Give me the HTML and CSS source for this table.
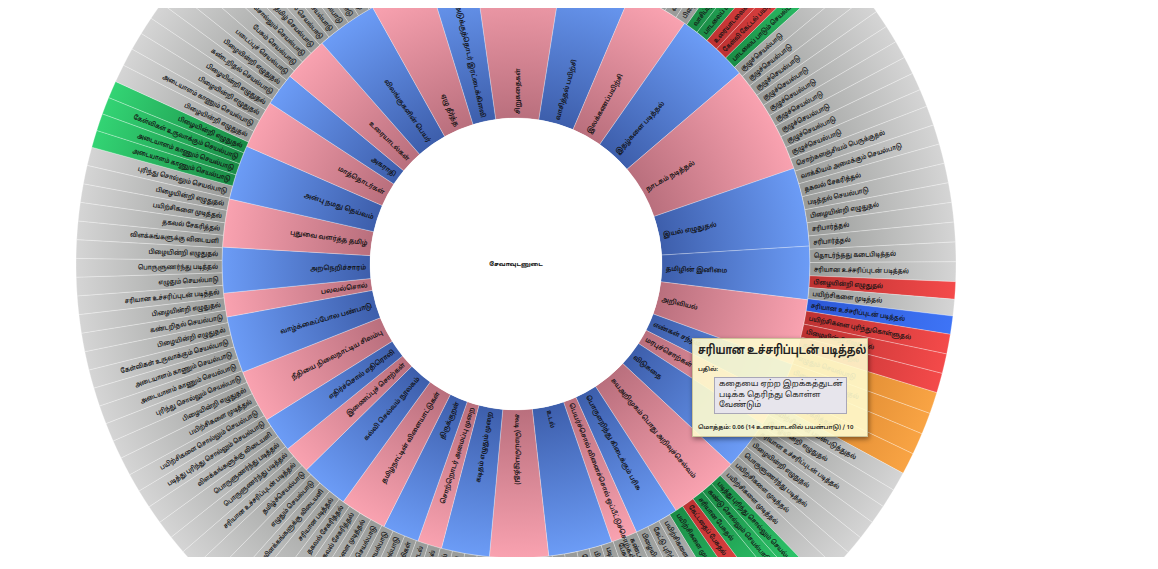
FILE: index.html
```html
<!DOCTYPE html>
<html lang="ta">
<head>
<meta charset="utf-8">
<title>செயல்பாடுகள் – சூரியவெடிப்பு வரைபடம்</title>
<link rel="stylesheet" href="styles.css">
</head>
<body>
<div class="chart">
  <svg class="sunburst" width="1142" height="549" viewBox="0 0 1142 549" xmlns="http://www.w3.org/2000/svg">
    <defs>
      <radialGradient id="g-blue" gradientUnits="userSpaceOnUse" cx="0" cy="0" r="440">
        <stop offset="0.33" stop-color="#3d5eab"/>
        <stop offset="0.668" stop-color="#6c9cf6"/>
      </radialGradient>
      <radialGradient id="g-pink" gradientUnits="userSpaceOnUse" cx="0" cy="0" r="440">
        <stop offset="0.33" stop-color="#b96f7d"/>
        <stop offset="0.668" stop-color="#f9a2b0"/>
      </radialGradient>
      <radialGradient id="g-gray" gradientUnits="userSpaceOnUse" cx="0" cy="0" r="440">
        <stop offset="0.668" stop-color="#999b99"/>
        <stop offset="1" stop-color="#d5d5d5"/>
      </radialGradient>
      <radialGradient id="g-green" gradientUnits="userSpaceOnUse" cx="0" cy="0" r="440">
        <stop offset="0.668" stop-color="#1a8c46"/>
        <stop offset="1" stop-color="#33d474"/>
      </radialGradient>
      <radialGradient id="g-red" gradientUnits="userSpaceOnUse" cx="0" cy="0" r="440">
        <stop offset="0.668" stop-color="#bd3232"/>
        <stop offset="1" stop-color="#f44a4a"/>
      </radialGradient>
      <radialGradient id="g-orange" gradientUnits="userSpaceOnUse" cx="0" cy="0" r="440">
        <stop offset="0.668" stop-color="#cf7c28"/>
        <stop offset="1" stop-color="#f9a444"/>
      </radialGradient>
      <radialGradient id="g-hover" gradientUnits="userSpaceOnUse" cx="0" cy="0" r="440">
        <stop offset="0.668" stop-color="#2c58d6"/>
        <stop offset="1" stop-color="#3e74f6"/>
      </radialGradient>
    </defs>
    <g class="root" transform="translate(508,256)">
      <g id="ring-mid"></g>
      <g id="ring-outer"></g>
      <g id="labels"></g>
      <circle class="hole" r="146" cx="0" cy="0"/>
      <text class="center-label" x="0" y="0" text-anchor="middle" dy="0.35em">சேவாவுடனுடை</text>
    </g>
  </svg>
  <div class="tooltip">
    <div class="tip-title">சரியான உச்சரிப்புடன் படித்தல்</div>
    <div class="tip-sub">பதில்:</div>
    <div class="tip-box">கதையை ஏற்ற இறக்கத்துடன்<br>படிக்க தெரிந்து கொள்ள<br>வேண்டும்</div>
    <div class="tip-foot">மொத்தம்: 0.06 (14 உரையாடலில் பயன்பாடு) / 10</div>
  </div>
</div>
<script src="script.js"></script>
</body>
</html>
```

FILE: styles.css
```css
html, body {
  background: #ffffff;
}
body {
  margin: 8px;
  font-family: "Noto Sans Tamil", "Lohit Tamil", "Noto Sans", "DejaVu Sans", sans-serif;
  color: #1a1a1a;
}
.chart {
  position: relative;
  width: 1142px;
  height: 549px;
  overflow: hidden;
}
.sunburst {
  display: block;
}
.hole {
  fill: #ffffff;
}
.fill-blue { fill: url(#g-blue); }
.fill-pink { fill: url(#g-pink); }
.fill-gray { fill: url(#g-gray); }
.fill-green { fill: url(#g-green); }
.fill-red { fill: url(#g-red); }
.fill-orange { fill: url(#g-orange); }
.fill-hover { fill: url(#g-hover); }
.seg-mid {
  stroke: rgba(255, 255, 255, 0.45);
  stroke-width: 0.6;
}
.seg-out {
  stroke: rgba(255, 255, 255, 0.45);
  stroke-width: 0.6;
}
.lbl-mid {
  font-size: 6.6px;
  font-weight: 600;
  fill: #101010;
}
.lbl-out {
  font-size: 6.6px;
  font-weight: 600;
  fill: #141414;
}
.center-label {
  font-size: 6px;
  font-weight: 700;
  fill: #111;
}
.tooltip {
  position: absolute;
  left: 684px;
  top: 330px;
  width: 176px;
  height: 99px;
  box-sizing: border-box;
  padding: 3px 5px 0 5px;
  background: rgba(255, 252, 206, 0.9);
  border: 1px solid #cdc59a;
  box-shadow: 1px 2px 5px rgba(0, 0, 0, 0.45);
}
.tip-title {
  font-size: 12.5px;
  font-weight: 700;
  line-height: 18px;
  color: #222;
  white-space: nowrap;
  transform: scaleX(0.77);
  transform-origin: 0 50%;
}
.tip-sub {
  font-size: 6px;
  line-height: 10px;
  margin-top: 5px;
  font-weight: 600;
}
.tip-box {
  margin: 2px 0 0 16px;
  width: 133px;
  height: 37px;
  box-sizing: border-box;
  padding: 1px 4px;
  font-size: 8px;
  line-height: 10.6px;
  white-space: nowrap;
  background: #e7e5ec;
  border: 1px solid #a9a7b7;
}
.tip-foot {
  font-size: 6px;
  font-weight: 600;
  line-height: 10px;
  margin-top: 9px;
  white-space: nowrap;
}
```

FILE: script.js
```js
(function () {
  var NS = 'http://www.w3.org/2000/svg';
  var R0 = 146, R1 = 294, R2 = 440;
  var midG = document.getElementById('ring-mid');
  var outG = document.getElementById('ring-outer');
  var lblG = document.getElementById('labels');

  function pt(r, a) {
    var t = a * Math.PI / 180;
    return (r * Math.sin(t)).toFixed(2) + ',' + (-r * Math.cos(t)).toFixed(2);
  }
  function arcPath(r0, r1, a0, a1) {
    var large = (a1 - a0) > 180 ? 1 : 0;
    return 'M' + pt(r1, a0) + 'A' + r1 + ',' + r1 + ' 0 ' + large + ' 1 ' + pt(r1, a1) +
      'L' + pt(r0, a1) + 'A' + r0 + ',' + r0 + ' 0 ' + large + ' 0 ' + pt(r0, a0) + 'Z';
  }
  function el(name, attrs, parent) {
    var e = document.createElementNS(NS, name);
    for (var k in attrs) e.setAttribute(k, attrs[k]);
    parent.appendChild(e);
    return e;
  }
  function label(text, a, r, cls, sx) {
    var norm = ((a % 360) + 360) % 360;
    var rot = (a - 90).toFixed(2);
    var sc = ' scale(' + sx + ',1)';
    var t;
    if (norm < 180) {
      t = el('text', { transform: 'rotate(' + rot + ') translate(' + r + ',0)' + sc, 'class': cls, 'text-anchor': 'start', dy: '0.35em' }, lblG);
    } else {
      t = el('text', { transform: 'rotate(' + rot + ') translate(' + r + ',0) rotate(180)' + sc, 'class': cls, 'text-anchor': 'end', dy: '0.35em' }, lblG);
    }
    t.textContent = text;
  }

  var mid = [
    [-8, 9, 'pink', 'சிறுகதைகள்'],
    [9, 23, 'blue', 'வாசித்தல் பயிற்சி'],
    [23, 35, 'pink', 'இலக்கணப்பயிற்சி'],
    [35, 49.5, 'blue', 'இதழ்களை படித்தல்'],
    [49.5, 71, 'pink', 'நாடகம் நடித்தல்'],
    [71, 86.5, 'blue', 'இயல் எழுதுதல்'],
    [86.5, 97, 'blue', 'தமிழின் இனிமை'],
    [97, 110, 'pink', 'அறிவியல்'],
    [110, 117, 'blue', 'எண்கள் சந்தம்'],
    [117, 123, 'pink', 'மரபுச்சொற்கள்'],
    [123, 133, 'blue', 'விடுகதை'],
    [133, 147, 'pink', 'சுயஅறிமுகம் பொது அறிவுச்செல்வம்'],
    [147, 155.8, 'blue', 'பொருளறிந்து கிடைக்கும் பரிசு'],
    [155.8, 161, 'pink', 'பெயர்ச்சொல் வினைச்சொல் ஒப்பீட்டுச்சொற்கள்'],
    [161, 173.6, 'blue', 'உடல்'],
    [173.6, 185.2, 'pink', 'கூடி (மெய்யெழுத்து)'],
    [185.2, 194.7, 'blue', 'கடிதம் எழுதும் முறை'],
    [194.7, 199.5, 'pink', 'சொற்றொடர் அமைப்பு முறை'],
    [199.5, 206.7, 'blue', 'திருக்குறள்'],
    [206.7, 216, 'pink', 'தமிழ்நாட்டின் விளையாட்டுகள்'],
    [216, 225.5, 'blue', 'கல்வி செல்வம் நூலகம்'],
    [225.5, 231, 'pink', 'இணைப்புச் சொற்கள்'],
    [231, 238, 'blue', 'எதிர்ச்சொல் எதிரொலி'],
    [238, 248.4, 'pink', 'நீதியை நிலைநாட்டிய சிலம்பு'],
    [248.4, 259.6, 'blue', 'வாழ்க்கைப்போல பண்பாடு'],
    [259.6, 264.3, 'pink', 'பலவல்சொல்'],
    [264.3, 273.3, 'blue', 'அறநெறிச்சாரம்'],
    [273.3, 282.8, 'pink', 'புதுவை வளர்த்த தமிழ்'],
    [282.8, 293.6, 'blue', 'அன்பு நமது தெய்வம்'],
    [293.6, 303.2, 'pink', 'மாத்தொடர்கள்'],
    [303.2, 309.7, 'blue', 'அகராதி'],
    [309.7, 318.7, 'pink', 'உரையாடல்கள்'],
    [318.7, 330.8, 'blue', 'விலங்குகளின் பெயர்'],
    [330.8, 342.9, 'pink', 'ஏழு தீர்த்த'],
    [342.9, 352, 'blue', 'அடுக்குத்தொடர் இரட்டைக்கிளவி']
  ];

  var pool = ['எழுதும் செயல்பாடு', 'பிழையின்றி எழுதுதல்', 'படித்தல் செயல்பாடு', 'தகவல் சேகரித்தல்',
    'பயிற்சிகளை முடித்தல்', 'கண்டறிதல் செயல்பாடு', 'பேசும் செயல்பாடு', 'பொருளுணர்ந்து படித்தல்'];
  function fromPool(n, off) {
    var out = [];
    for (var i = 0; i < n; i++) out.push(pool[(i + off) % pool.length]);
    return out;
  }

  var leftLower = [
    'புரிந்து சொல்லும் செயல்பாடு', 'பிழையின்றி எழுதுதல்', 'பயிற்சிகளை முடித்தல்', 'தகவல் சேகரித்தல்',
    'விளக்கங்களுக்கு விடையளி', 'பிழையின்றி எழுதுதல்', 'பொருளுணர்ந்து படித்தல்', 'எழுதும் செயல்பாடு',
    'சரியான உச்சரிப்புடன் படித்தல்', 'பிழையின்றி எழுதுதல்', 'கண்டறிதல் செயல்பாடு', 'பிழையின்றி எழுதுதல்',
    'கேள்விகள் உருவாக்கும் செயல்பாடு', 'அடையாளம் காணும் செயல்பாடு', 'அடையாளம் காணும் செயல்பாடு',
    'புரிந்து சொல்லும் செயல்பாடு', 'பிழையின்றி எழுதுதல்', 'பயிற்சிகளை முடித்தல்', 'பயிற்சிகளை சொல்லும் செயல்பாடு',
    'படித்து புரிந்து சொல்லும் செயல்பாடு', 'விளக்கங்களுக்கு விடையளி', 'பொருளுணர்ந்து படித்தல்',
    'பொருளுணர்ந்து படித்தல்', 'சரியான உச்சரிப்புடன் படித்தல்', 'தமிழ்ச்செயல்பாடு', 'எழுதும் செயல்பாடு',
    'விளக்கங்களுக்கு விடையளி', 'சரியான படித்தல்', 'தகவல் சேகரித்தல்', 'தகவல் சேகரித்தல்',
    'பயிற்சிகளை முடித்தல்', 'தமிழ்ச்செயல்பாடு', 'குழுச்செயல்பாடு', 'பேசும் செயல்பாடு', 'ஒலிகள்',
    'பாடல்', 'எழுதுதல்', 'படித்தல்', 'செயல்பாடு', 'ஒலிகள்', 'பாடல்', 'கேட்டல்', 'எழுதுதல்',
    'பேசுதல்', 'ஒலிகள்', 'செயல்பாடு', 'பாடல்', 'எழுதும் செயல்பாடு', 'கேட்டல் செயல்பாடு',
    'பிழையின்றி எழுதுதல்', 'படித்தல் செயல்பாடு', 'பேசும் செயல்பாடு', 'கண்டறிதல் செயல்பாடு',
    'பிழையின்றி எழுதுதல்', 'கேட்டு புரிந்து சொல்லுதல்', 'பயிற்சிகளை முடித்தல்'
  ];
  var leftUpper = [
    'பாடல் செயல்பாடு', 'நடிப்புச் செயல்பாடு', 'குழுச் செயல்பாடு', 'எழுதும் செயல்பாடு',
    'ஒப்பித்தல் செயல்பாடு', 'தமிழ் செயல்பாடு', 'கதை சொல்லும் செயல்பாடு', 'பேசும் செயல்பாடு',
    'படைப்புச் செயல்பாடு', 'பிழையின்றி எழுதுதல்', 'கண்டறிதல் செயல்பாடு', 'பிழையின்றி எழுதுதல்',
    'பிழையின்றி எழுதுதல்', 'அடையாளம் காணும் செயல்பாடு', 'பிழையின்றி எழுதுதல்'
  ];
  var leftGreen = ['பிழையின்றி எழுதுதல்', 'கேள்விகள் உருவாக்கும் செயல்பாடு',
    'அடையாளம் காணும் செயல்பாடு', 'அடையாளம் காணும் செயல்பாடு'];

  function rev(a) { return a.slice().reverse(); }

  var outer = [
    [-30, 35.5, 'gray', fromPool(26, 0)],
    [35.5, 40.5, 'green', ['வாசிப்புப் பயிற்சி', 'பாடலைப் பாடும் செயல்பாடு']],
    [40.5, 45.5, 'red', ['உரையாடலைக் கேட்டு பேசுதல்', 'கேள்வி கேட்டல் பயிற்சி']],
    [45.5, 48, 'green', ['பாடலைப் பாடும் செயல்பாடு']],
    [48, 69, 'gray', ['குழுச்செயல்பாடு', 'குழுச்செயல்பாடு', 'குழுச்செயல்பாடு', 'குழுச்செயல்பாடு', 'குழுச்செயல்பாடு',
      'குழுச்செயல்பாடு', 'குழுச்செயல்பாடு', 'குழுச்செயல்பாடு', 'குழுச்செயல்பாடு']],
    [69, 92.3, 'gray', ['சொற்களஞ்சியம் பெருக்குதல்', 'வாக்கியம் அமைக்கும் செயல்பாடு', 'தகவல் சேகரித்தல்',
      'படித்தல் செயல்பாடு', 'பிழையின்றி எழுதுதல்', 'சரிபார்த்தல்', 'சரிபார்த்தல்', 'தொடர்ந்தது கடைபிடித்தல்',
      'சரியான உச்சரிப்புடன் படித்தல்']],
    [92.3, 94.6, 'red', ['பிழையின்றி எழுதுதல்']],
    [94.6, 96.8, 'gray', ['பயிற்சிகளை முடித்தல்']],
    [96.8, 99.2, 'hover', ['சரியான உச்சரிப்புடன் படித்தல்']],
    [99.2, 107, 'red', ['பயிற்சிகளை புரிந்துகொள்ளுதல்', 'பிழையின்றி எழுதுதல்', 'தகவல் சேகரித்தல்']],
    [107, 118.4, 'orange', ['எழுதும் செயல்பாடு', 'பிழையின்றி எழுதுதல்', 'படித்தல் செயல்பாடு', 'தகவல் சேகரித்தல்']],
    [118.4, 136, 'gray', ['பயிற்சிகளை பயன்படுத்துதல்', 'பிழையின்றி எழுதுதல்', 'சரியான உச்சரிப்புடன் படித்தல்',
      'பிழையின்றி எழுதுதல்', 'பொருளுணர்ந்து படித்தல்', 'பயிற்சிகளை முடித்தல்', 'பயிற்சிகளை முடித்தல்']],
    [136, 143, 'green', ['படித்து புரிந்து சொல்லும் செயல்பாடு', 'கண்டு சொல்லும் செயல்பாடு', 'சரியான பேசுதல்']],
    [143, 145.5, 'red', ['கேட்டதைப் பேசுதல்']],
    [145.5, 148.5, 'green', ['பயிற்சிகளை முடித்தல்']],
    [148.5, 285.4, 'gray', rev(leftLower)],
    [285.4, 294.5, 'green', rev(leftGreen)],
    [294.5, 330, 'gray', rev(leftUpper)]
  ];

  mid.forEach(function (s) {
    el('path', { d: arcPath(R0, R1, s[0], s[1]), 'class': 'seg-mid fill-' + s[2] }, midG);
  });

  outer.forEach(function (g) {
    var a0 = g[0], a1 = g[1], labels = g[3], n = labels.length;
    var step = (a1 - a0) / n;
    for (var i = 0; i < n; i++) {
      var s = a0 + i * step, e = s + step;
      el('path', { d: arcPath(R1, R2, s, e), 'class': 'seg-out fill-' + g[2] }, outG);
      label(labels[i], s + step / 2, R1 + 4, 'lbl-out', 0.85);
    }
  });

  mid.forEach(function (s) {
    label(s[3], (s[0] + s[1]) / 2, R0 + 4, 'lbl-mid', 0.95);
  });
})();
```
